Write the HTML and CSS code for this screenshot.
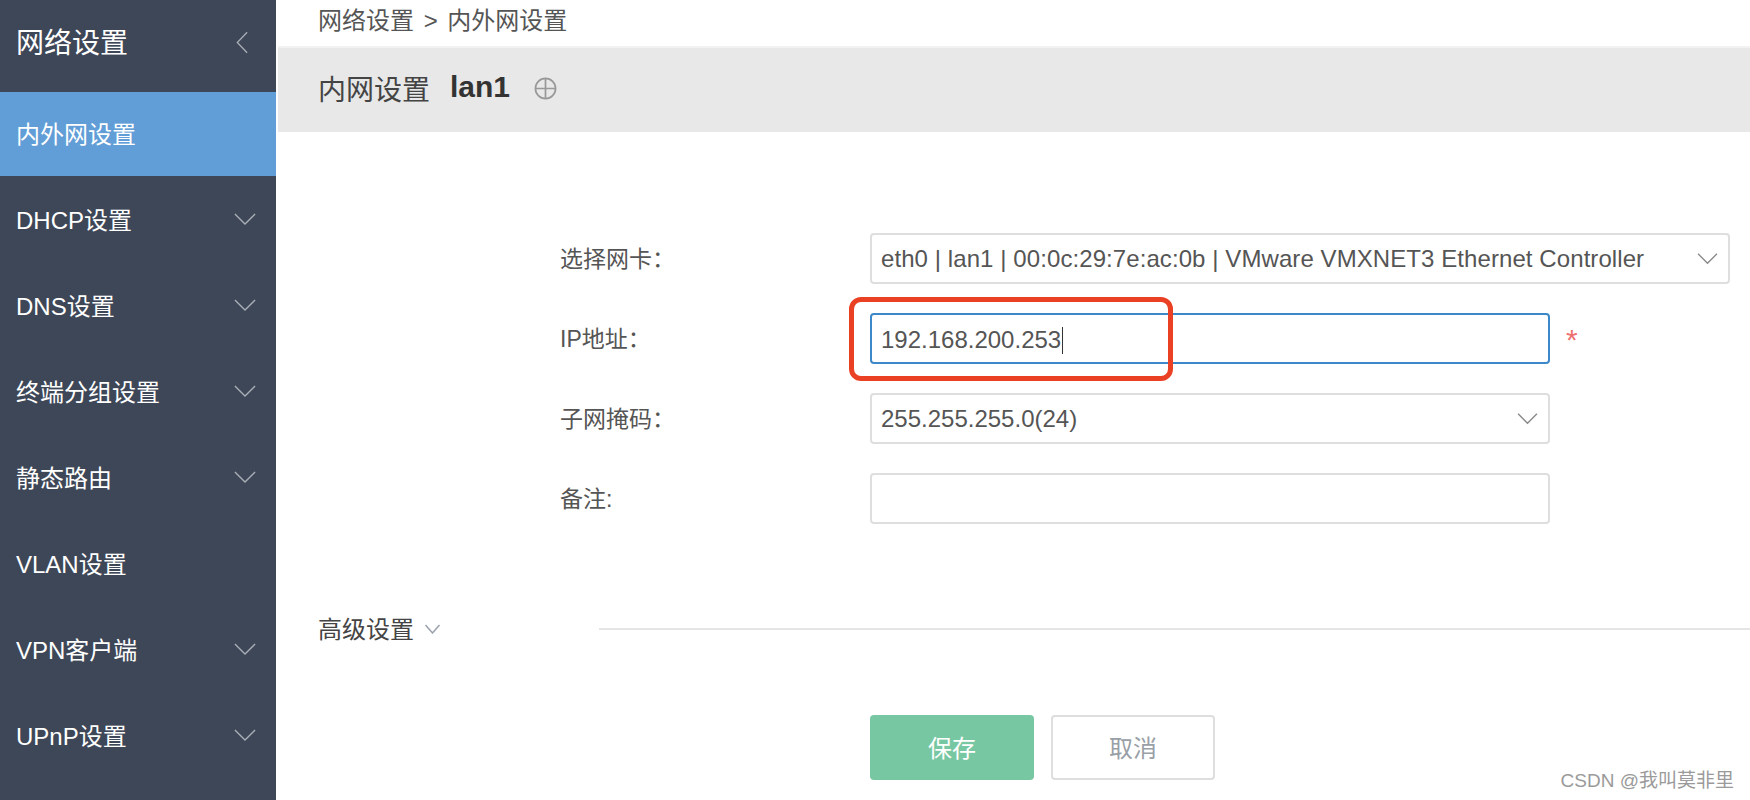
FILE: index.html
```html
<!DOCTYPE html>
<html lang="zh-CN">
<head>
<meta charset="utf-8">
<title>内外网设置</title>
<link rel="stylesheet" href="styles.css">
</head>
<body>
<div class="page">
  <aside class="sidebar">
    <div class="side-head">
      <span>网络设置</span>
      <svg class="chev-left" viewBox="0 0 14 26"><path d="M13 1 1.500 13 13 25"/></svg>
    </div>
    <nav class="side-nav">
      <div class="nav-item active"><span>内外网设置</span></div>
      <div class="nav-item"><span>DHCP设置</span><svg class="chev" viewBox="0 0 24 14"><path d="M1 1l11 11L23 1"/></svg></div>
      <div class="nav-item"><span>DNS设置</span><svg class="chev" viewBox="0 0 24 14"><path d="M1 1l11 11L23 1"/></svg></div>
      <div class="nav-item"><span>终端分组设置</span><svg class="chev" viewBox="0 0 24 14"><path d="M1 1l11 11L23 1"/></svg></div>
      <div class="nav-item"><span>静态路由</span><svg class="chev" viewBox="0 0 24 14"><path d="M1 1l11 11L23 1"/></svg></div>
      <div class="nav-item"><span>VLAN设置</span></div>
      <div class="nav-item"><span>VPN客户端</span><svg class="chev" viewBox="0 0 24 14"><path d="M1 1l11 11L23 1"/></svg></div>
      <div class="nav-item"><span>UPnP设置</span><svg class="chev" viewBox="0 0 24 14"><path d="M1 1l11 11L23 1"/></svg></div>
    </nav>
  </aside>
  <main class="main">
    <div class="crumb">网络设置 &gt; 内外网设置</div>
    <div class="band">
      <span class="band-title">内网设置</span>
      <b class="band-name">lan1</b>
      <svg class="plus" viewBox="0 0 24 24"><circle cx="12" cy="12" r="10.500"/><path d="M12 1.500v21M1.500 12h21"/></svg>
    </div>
    <form class="form">
      <div class="row">
        <label class="label">选择网卡：</label>
        <div class="field wide"><span>eth0 | lan1 | 00:0c:29:7e:ac:0b | VMware VMXNET3 Ethernet Controller</span><svg class="chev-s" viewBox="0 0 24 14"><path d="M1 1l11 11L23 1"/></svg></div>
      </div>
      <div class="row">
        <label class="label">IP地址：</label>
        <div class="field focus"><span>192.168.200.253</span><i class="caret"></i></div>
        <span class="req">*</span>
        <div class="mark"></div>
      </div>
      <div class="row">
        <label class="label">子网掩码：</label>
        <div class="field"><span>255.255.255.0(24)</span><svg class="chev-s" viewBox="0 0 24 14"><path d="M1 1l11 11L23 1"/></svg></div>
      </div>
      <div class="row">
        <label class="label">备注:</label>
        <div class="field"></div>
      </div>
    </form>
    <div class="advanced">
      <span class="adv-text">高级设置</span>
      <svg class="adv-chev" viewBox="0 0 16 10"><path d="M1 1l7 8 7-8"/></svg>
      <div class="adv-line"></div>
    </div>
    <div class="actions">
      <button class="btn save" type="button">保存</button>
      <button class="btn cancel" type="button">取消</button>
    </div>
  </main>
</div>
<div class="watermark">CSDN @我叫莫非里</div>
</body>
</html>
```
FILE: styles.css
```css
* { box-sizing: border-box; }
html, body { margin: 0; height: 800px; overflow: hidden; background: #fff; }
body { font-family: "Liberation Sans", "Noto Sans CJK SC", sans-serif; color: #555; position: relative; }
.page { display: flex; height: 800px; }

.sidebar { width: 276px; flex: none; background: #3e4757; color: #fff; overflow: hidden; }
.side-head { height: 92px; display: flex; align-items: center; justify-content: space-between; padding: 0 28px 10px 16px; font-size: 28px; }
.chev-left { width: 12px; height: 25px; fill: none; stroke: #a9aeb7; stroke-width: 1.500; margin-top: 2px; }
.nav-item { height: 86px; display: flex; align-items: center; justify-content: space-between; padding: 0 20px 2px 16px; font-size: 24px; }
.nav-item.active { height: 84px; padding-bottom: 4px; background: #619dd6; }
.chev { width: 22px; height: 13px; fill: none; stroke: #a9aeb7; stroke-width: 1.500; margin-top: 3px; }

.main { flex: 1; min-width: 0; margin-left: 2px; }
.crumb { height: 48px; border-bottom: 2px solid #f2f2f2; padding: 0 0 10px 40px; display: flex; align-items: center; font-size: 24px; color: #555; word-spacing: 3px; }
.band { height: 84px; background: #e8e8e8; display: flex; align-items: center; padding: 0 0 3px 40px; color: #444; }
.band-title { font-size: 28px; margin-right: 20px; margin-top: -2px; }
.band-name { font-size: 30px; color: #333; margin-right: 24px; margin-top: -3px; }
.plus { width: 23px; height: 23px; fill: none; stroke: #999; stroke-width: 1.800; margin-top: -1px; }

.form { padding: 101px 0 0 282px; display: flex; flex-direction: column; gap: 29px; }
.row { display: flex; align-items: center; height: 51px; position: relative; }
.label { width: 310px; flex: none; font-size: 23px; color: #555; padding-bottom: 4px; }
.field { width: 680px; height: 51px; flex: none; border: 2px solid #dedede; border-radius: 4px; background: #fff; display: flex; align-items: center; justify-content: space-between; padding: 1px 8px 0 9px; font-size: 24px; color: #555; }
.field.wide { width: 860px; letter-spacing: 0.08px; }
.field.focus { border-color: #3d88c9; justify-content: flex-start; padding-top: 3px; }
.caret { width: 1px; height: 27px; background: #333; margin-left: 1px; }
.chev-s { width: 21px; height: 12px; fill: none; stroke: #888; stroke-width: 1.600; margin-right: 2px; }
.req { color: #ee6f6f; font-size: 30px; margin-left: 16px; line-height: 1; margin-top: 2px; }
.mark { position: absolute; left: 289px; top: -16px; width: 324px; height: 84px; border: 5px solid #ea4125; border-radius: 12px; }

.advanced { display: flex; align-items: center; margin-top: 85px; padding-left: 40px; height: 40px; }
.adv-text { font-size: 24px; color: #444; flex: none; padding-bottom: 4px; }
.adv-chev { width: 17px; height: 10px; fill: none; stroke: #9aa2ab; stroke-width: 1.500; flex: none; margin-left: 10px; margin-bottom: 0; }
.adv-line { height: 2px; background: #e5e5e5; flex: 1; margin-left: 158px; }

.actions { display: flex; gap: 17px; padding-left: 592px; margin-top: 66px; }
.btn { width: 164px; height: 65px; border-radius: 4px; font-size: 24px; font-family: inherit; padding: 0 0 2px; }
.save { background: #78c7a3; color: #fff; border: 0; }
.cancel { background: #fff; color: #999fa6; border: 2px solid #dedede; }

.watermark { position: absolute; right: 16px; top: 769px; font-size: 19px; color: #9a9a9a; line-height: 24px; }
```
